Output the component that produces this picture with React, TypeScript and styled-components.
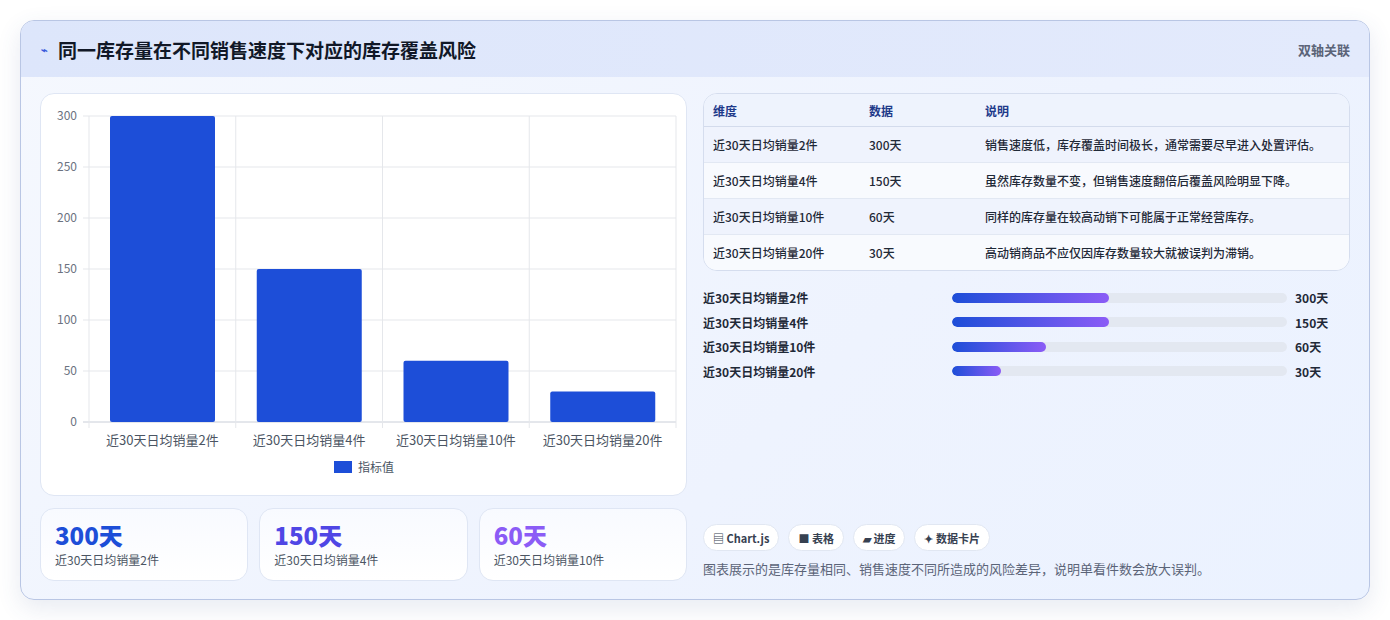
import React from "react";
import styled, { createGlobalStyle } from "styled-components";

const GlobalStyle = createGlobalStyle`
  body {
    margin: 0;
    background: #ffffff;
    font-family: "Noto Sans CJK SC", "Noto Sans", sans-serif;
  }
`;

const Page = styled.div`
  padding: 20px 20px 20px 20px;
  height: 620px;
  box-sizing: border-box;
`;

const Card = styled.div`
  width: 1350px;
  height: 580px;
  box-sizing: border-box;
  border: 1px solid #b9c6e4;
  border-radius: 14px;
  overflow: hidden;
  background: linear-gradient(135deg, #f5f8fe 0%, #eef3fe 60%, #ebf2ff 100%);
  box-shadow: 0 8px 24px rgba(60, 80, 140, 0.12);
  display: flex;
  flex-direction: column;
`;

const Header = styled.div`
  height: 56px;
  flex: none;
  display: flex;
  align-items: center;
  justify-content: space-between;
  padding: 0 19px 0 20px;
  background: linear-gradient(90deg, #dde6fb, #e3eafc);
`;

const Title = styled.h1`
  margin: 0;
  font-size: 19px;
  font-weight: 700;
  color: #111827;
  display: flex;
  align-items: center;
  gap: 10px;
`;

const Mark = styled.span`
  font-size: 11px;
  color: #3b5bdb;
`;

const HeaderTag = styled.span`
  font-size: 13px;
  color: #5b6478;
  font-weight: 600;
`;

const Body = styled.div`
  flex: 1;
  display: grid;
  grid-template-columns: 647px 647px;
  gap: 16px;
  padding: 16px 19px 18px 19px;
`;

const Column = styled.div`
  display: flex;
  flex-direction: column;
  gap: 12px;
  min-height: 0;
`;

const ChartBox = styled.div`
  height: 403px;
  box-sizing: border-box;
  background: #ffffff;
  border: 1px solid #dfe6f4;
  border-radius: 14px;
`;

const Stats = styled.div`
  display: grid;
  grid-template-columns: repeat(3, 1fr);
  gap: 11px;
`;

const Stat = styled.div`
  height: 73px;
  box-sizing: border-box;
  border: 1px solid #dfe6f4;
  border-radius: 14px;
  background: linear-gradient(180deg, #f8faff, #ffffff);
  padding: 11px 14px;
`;

const StatValue = styled.div<{ $color: string }>`
  font-size: 24px;
  font-weight: 800;
  line-height: 30px;
  color: ${(p) => p.$color};
`;

const StatLabel = styled.div`
  font-size: 12px;
  color: #4b5563;
  margin-top: 1px;
`;

const TableWrap = styled.div`
  border: 1px solid #d5ddee;
  border-radius: 14px;
  overflow: hidden;
  background: #f6f9ff;
`;

const Table = styled.table`
  width: 100%;
  border-collapse: collapse;
  font-size: 12px;
  th {
    text-align: left;
    color: #1e3a8a;
    font-weight: 700;
    height: 32px;
    padding: 0 9px;
    background: #eef3fd;
    border-bottom: 1px solid #d3dbec;
  }
  td {
    height: 35px;
    padding: 0 9px;
    color: #1f2937;
    font-weight: 500;
    border-top: 1px solid #e2e8f3;
  }
  tbody tr:nth-child(odd) td { background: #eff3fd; }
  tbody tr:nth-child(even) td { background: #f8fafe; }
`;

const Bars = styled.div`
  display: flex;
  flex-direction: column;
  gap: 7px;
  margin-top: 6px;
`;

const BarRow = styled.div`
  display: grid;
  grid-template-columns: 241px 335px 1fr;
  gap: 8px;
  align-items: center;
  height: 17.5px;
  font-size: 12px;
  font-weight: 700;
  color: #1f2937;
`;

const Track = styled.div`
  height: 10px;
  border-radius: 5px;
  background: #e3e8f1;
  overflow: hidden;
`;

const Fill = styled.div`
  height: 100%;
  border-radius: 5px;
  background: linear-gradient(90deg, #1d4ed8, #8b5cf6);
`;

const Spacer = styled.div`
  flex: 1;
`;

const Tags = styled.div`
  display: flex;
  gap: 9px;
`;

const Tag = styled.span`
  height: 27px;
  box-sizing: border-box;
  padding: 0 9px;
  border-radius: 14px;
  background: #ffffff;
  border: 1px solid #e1e7f2;
  font-size: 11px;
  font-weight: 700;
  color: #374151;
  display: flex;
  align-items: center;
  gap: 4px;
`;

const Note = styled.p`
  margin: 8px 0 3px;
  font-size: 13px;
  color: #5b6478;
`;

const data = [
  { label: "近30天日均销量2件", value: 300, desc: "销售速度低，库存覆盖时间极长，通常需要尽早进入处置评估。", pct: 47 },
  { label: "近30天日均销量4件", value: 150, desc: "虽然库存数量不变，但销售速度翻倍后覆盖风险明显下降。", pct: 47 },
  { label: "近30天日均销量10件", value: 60, desc: "同样的库存量在较高动销下可能属于正常经营库存。", pct: 28 },
  { label: "近30天日均销量20件", value: 30, desc: "高动销商品不应仅因库存数量较大就被误判为滞销。", pct: 14.5 },
];

const BarChart = () => {
  const x0 = 48, x1 = 635, y0 = 22, y1 = 328;
  const slot = (x1 - x0) / 4;
  const ticks = [0, 50, 100, 150, 200, 250, 300];
  const sy = (v: number) => y1 - (v / 300) * (y1 - y0);
  return (
    <svg width="647" height="401" fontFamily='"Noto Sans CJK SC", sans-serif'>
      {ticks.map((t) => (
        <g key={t}>
          <line x1={x0 - 6} x2={x1} y1={sy(t)} y2={sy(t)} stroke={t === 0 ? "#c9ced8" : "#e5e7eb"} />
          <text x={x0 - 12} y={sy(t) + 4} fontSize="12" fill="#6b7280" textAnchor="end">{t}</text>
        </g>
      ))}
      {[0, 1, 2, 3, 4].map((i) => (
        <line key={i} x1={x0 + i * slot} x2={x0 + i * slot} y1={y0} y2={y1 + 6} stroke="#e5e7eb" />
      ))}
      {data.map((d, i) => (
        <g key={d.label}>
          <rect x={x0 + i * slot + 21} y={sy(d.value)} width={105} height={y1 - sy(d.value)} rx="2" fill="#1d4ed8" />
          <text x={x0 + i * slot + slot / 2} y={351} fontSize="13" fill="#4b5563" textAnchor="middle">{d.label}</text>
        </g>
      ))}
      <rect x="293" y="367" width="18" height="12" fill="#1d4ed8" />
      <text x="317" y="378" fontSize="12" fill="#4b5563">指标值</text>
    </svg>
  );
};

export default function App() {
  return (
    <Page>
      <GlobalStyle />
      <Card>
        <Header>
          <Title><Mark>⌁</Mark>同一库存量在不同销售速度下对应的库存覆盖风险</Title>
          <HeaderTag>双轴关联</HeaderTag>
        </Header>
        <Body>
          <Column>
            <ChartBox><BarChart /></ChartBox>
            <Stats>
              <Stat><StatValue $color="#1d4ed8">300天</StatValue><StatLabel>近30天日均销量2件</StatLabel></Stat>
              <Stat><StatValue $color="#4f46e5">150天</StatValue><StatLabel>近30天日均销量4件</StatLabel></Stat>
              <Stat><StatValue $color="#8b5cf6">60天</StatValue><StatLabel>近30天日均销量10件</StatLabel></Stat>
            </Stats>
          </Column>
          <Column>
            <TableWrap>
              <Table>
                <thead>
                  <tr><th style={{ width: 138 }}>维度</th><th style={{ width: 98 }}>数据</th><th>说明</th></tr>
                </thead>
                <tbody>
                  {data.map((d) => (
                    <tr key={d.label}><td>{d.label}</td><td>{d.value}天</td><td>{d.desc}</td></tr>
                  ))}
                </tbody>
              </Table>
            </TableWrap>
            <Bars>
              {data.map((d) => (
                <BarRow key={d.label}>
                  <span>{d.label}</span>
                  <Track><Fill style={{ width: `${d.pct}%` }} /></Track>
                  <span>{d.value}天</span>
                </BarRow>
              ))}
            </Bars>
            <Spacer />
            <div>
              <Tags>
                <Tag>▤ Chart.js</Tag>
                <Tag>■ 表格</Tag>
                <Tag>▰ 进度</Tag>
                <Tag>✦ 数据卡片</Tag>
              </Tags>
              <Note>图表展示的是库存量相同、销售速度不同所造成的风险差异，说明单看件数会放大误判。</Note>
            </div>
          </Column>
        </Body>
      </Card>
    </Page>
  );
}
